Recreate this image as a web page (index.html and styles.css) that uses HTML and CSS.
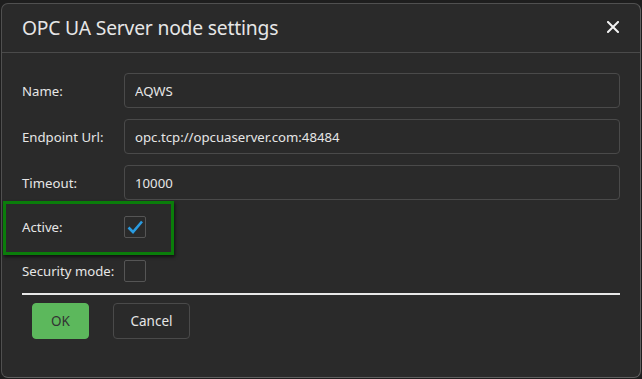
FILE: index.html
```html
<!DOCTYPE html>
<html lang="en">
<head>
    <meta charset="UTF-8">
    <meta name="viewport" content="width=device-width, initial-scale=1.0">
    <title>OPC UA Server node settings</title>
    <link rel="stylesheet" href="styles.css">
</head>
<body>
    <div class="dialog">
        <header class="dialog-header">
            <h1 class="dialog-title">OPC UA Server node settings</h1>
            <button class="close-btn" aria-label="Close">
                <svg width="12" height="12" viewBox="0 0 12 12">
                    <path d="M1 1 L11 11 M11 1 L1 11" stroke="#f2f2f2" stroke-width="2" stroke-linecap="square"/>
                </svg>
            </button>
        </header>

        <div class="dialog-body">
            <div class="form-row">
                <label class="form-label">Name:</label>
                <input class="form-input" type="text" value="AQWS">
            </div>
            <div class="form-row">
                <label class="form-label">Endpoint Url:</label>
                <input class="form-input" type="text" value="opc.tcp://opcuaserver.com:48484">
            </div>
            <div class="form-row">
                <label class="form-label">Timeout:</label>
                <input class="form-input" type="text" value="10000">
            </div>
            <div class="form-row check-row highlighted">
                <label class="form-label">Active:</label>
                <span class="checkbox">
                    <svg width="20" height="20" viewBox="0 0 20 20">
                        <path d="M3.5 10.5 L8 15 L17 4.5" fill="none" stroke="#2a9be0" stroke-width="2.6"/>
                    </svg>
                </span>
            </div>
            <div class="form-row check-row">
                <label class="form-label">Security mode:</label>
                <span class="checkbox"></span>
            </div>

            <div class="separator"></div>

            <div class="actions">
                <button class="btn btn-ok">OK</button>
                <button class="btn btn-cancel">Cancel</button>
            </div>
        </div>
    </div>
</body>
</html>
```

FILE: styles.css
```css
:root {
    --page-bg: #1e1e1e;
    --dialog-bg: #2a2a2a;
    --border: #4a4a4a;
    --text: #e6e6e6;
    --green: #5cb85c;
    --check-blue: #2a9be0;
}

* {
    margin: 0;
    padding: 0;
    box-sizing: border-box;
    font-family: 'Noto Sans', 'Open Sans', sans-serif;
}

body {
    background: var(--page-bg);
    width: 642px;
    height: 379px;
    overflow: hidden;
    padding: 3px 1px 1px 1px;
}

.dialog {
    height: 375px;
    background: var(--dialog-bg);
    border: 1px solid #505050;
    border-right-color: #606060;
    border-bottom-color: #606060;
    border-radius: 7px;
    display: flex;
    flex-direction: column;
}

.dialog-header {
    height: 49px;
    display: flex;
    align-items: center;
    justify-content: space-between;
    padding: 0 21px 0 20px;
    border-bottom: 1px solid var(--border);
}

.dialog-title {
    font-weight: 400;
    font-size: 19.3px;
    color: var(--text);
    letter-spacing: -0.2px;
    margin-top: -2px;
}

.close-btn {
    background: none;
    border: none;
    width: 12px;
    height: 12px;
    display: flex;
    margin-top: -2px;
    cursor: pointer;
}

.dialog-body {
    padding: 20px 20px 0 20px;
    display: flex;
    flex-direction: column;
}

.form-row {
    display: flex;
    align-items: center;
    height: 35px;
    margin-bottom: 11px;
    position: relative;
}

.form-label {
    width: 102px;
    flex-shrink: 0;
    font-size: 13.2px;
    color: var(--text);
}

.form-input {
    width: 496px;
    height: 35px;
    background: var(--dialog-bg);
    border: 1px solid var(--border);
    border-radius: 4px;
    padding: 0 10px;
    font-size: 13.2px;
    color: var(--text);
    outline: none;
}

.check-row {
    height: 32px;
    margin-bottom: 12px;
}

.check-row:first-of-type {
    margin-top: 1px;
}

.checkbox {
    width: 22px;
    height: 22px;
    border: 1px solid #555;
    border-radius: 2px;
    display: flex;
    align-items: center;
    justify-content: center;
}

/* annotation frame around the Active row */
.highlighted::after {
    content: '';
    position: absolute;
    left: -19px;
    top: -10px;
    width: 165px;
    height: 48px;
    border: 3px solid #0a7d0a;
    box-shadow: 1px 2px 3px rgba(0, 0, 0, 0.6);
    pointer-events: none;
}

.separator {
    height: 2px;
    background: #e8e8e8;
    margin-top: -6px;
    width: 598px;
}

.actions {
    display: flex;
    gap: 24px;
    padding-left: 10px;
    margin-top: 8px;
}

.btn {
    height: 36px;
    border-radius: 4px;
    font-size: 13.5px;
    cursor: pointer;
}

.btn-ok {
    width: 57px;
    background: var(--green);
    border: 1px solid var(--green);
    color: #333;
}

.btn-cancel {
    width: 77px;
    background: var(--dialog-bg);
    border: 1px solid var(--border);
    color: var(--text);
}
```
